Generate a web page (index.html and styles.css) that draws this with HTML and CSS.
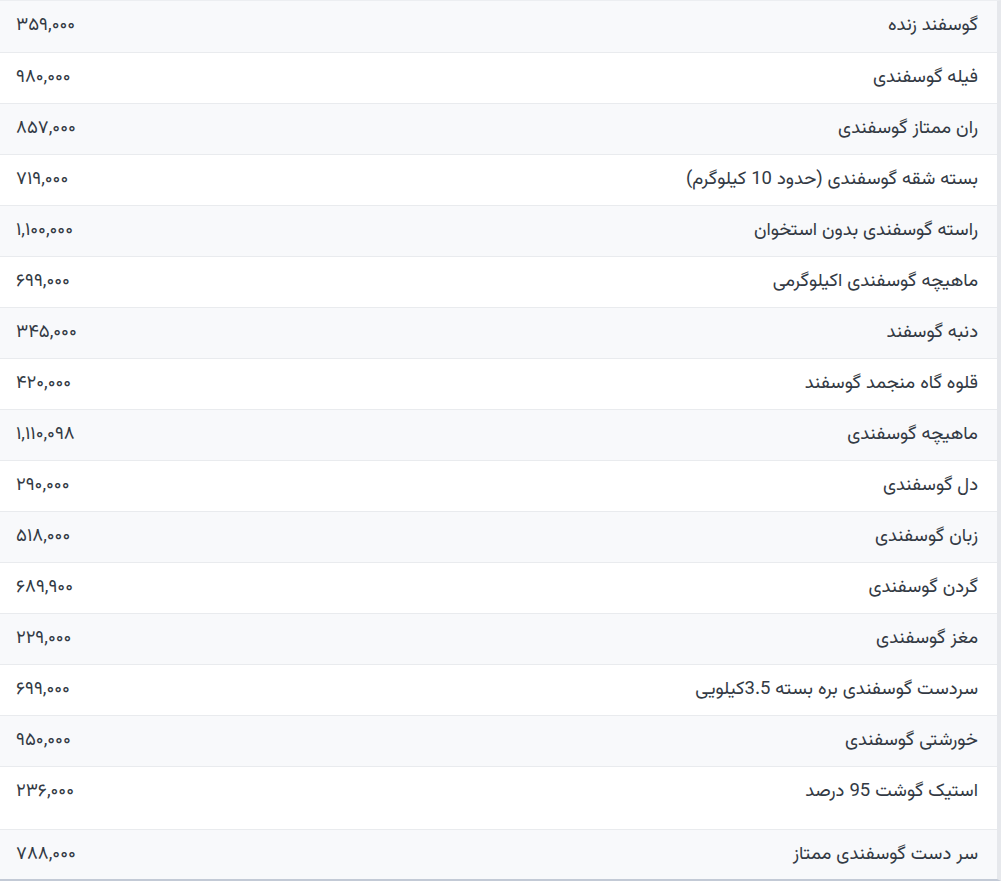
FILE: index.html
```html
<!DOCTYPE html>
<html lang="fa" dir="rtl">
<head>
<meta charset="utf-8">
<title>قیمت گوشت گوسفندی</title>
<link rel="stylesheet" href="styles.css">
</head>
<body>
<div class="wrap">
<table class="prices">
<tbody>
<tr><td class="name">گوسفند زنده</td><td class="price">۳۵۹,۰۰۰</td></tr>
<tr><td class="name">فیله گوسفندی</td><td class="price">۹۸۰,۰۰۰</td></tr>
<tr><td class="name">ران ممتاز گوسفندی</td><td class="price">۸۵۷,۰۰۰</td></tr>
<tr><td class="name">بسته شقه گوسفندی (حدود 10 کیلوگرم)</td><td class="price">۷۱۹,۰۰۰</td></tr>
<tr><td class="name">راسته گوسفندی بدون استخوان</td><td class="price">۱,۱۰۰,۰۰۰</td></tr>
<tr><td class="name">ماهیچه گوسفندی اکیلوگرمی</td><td class="price">۶۹۹,۰۰۰</td></tr>
<tr><td class="name">دنبه گوسفند</td><td class="price">۳۴۵,۰۰۰</td></tr>
<tr><td class="name">قلوه گاه منجمد گوسفند</td><td class="price">۴۲۰,۰۰۰</td></tr>
<tr><td class="name">ماهیچه گوسفندی</td><td class="price">۱,۱۱۰,۰۹۸</td></tr>
<tr><td class="name">دل گوسفندی</td><td class="price">۲۹۰,۰۰۰</td></tr>
<tr><td class="name">زبان گوسفندی</td><td class="price">۵۱۸,۰۰۰</td></tr>
<tr><td class="name">گردن گوسفندی</td><td class="price">۶۸۹,۹۰۰</td></tr>
<tr><td class="name">مغز گوسفندی</td><td class="price">۲۲۹,۰۰۰</td></tr>
<tr><td class="name">سردست گوسفندی بره بسته 3.5کیلویی</td><td class="price">۶۹۹,۰۰۰</td></tr>
<tr><td class="name">خورشتی گوسفندی</td><td class="price">۹۵۰,۰۰۰</td></tr>
<tr class="tall"><td class="name">استیک گوشت 95 درصد</td><td class="price">۲۳۶,۰۰۰</td></tr>
<tr><td class="name">سر دست گوسفندی ممتاز</td><td class="price">۷۸۸,۰۰۰</td></tr>
</tbody>
</table>
</div>
</body>
</html>
```
FILE: styles.css
```css
html, body {
  margin: 0;
  padding: 0;
  background: #ffffff;
}
body {
  font-family: "Vazirmatn", "DejaVu Sans", sans-serif;
  color: #333a44;
}
.wrap {
  width: 997px;
  border-right: 4px solid #e6e8ec;
  border-bottom: 2px solid #c3cad6;
  border-top: 1px solid #eceef1;
}
.prices {
  width: 100%;
  border-collapse: collapse;
  font-size: 18.5px;
}
.prices tr {
  height: 51px;
  border-bottom: 1px solid #e9ebee;
}
.prices tr:last-child {
  border-bottom: none;
  height: 50px;
}
.prices tr:nth-child(odd) {
  background: #f8f9fb;
}
.prices tr.tall {
  height: 63px;
}
.prices td {
  vertical-align: top;
  padding: 12px 19px 0 16px;
  line-height: 26px;
}
.name {
  text-align: right;
}
.price {
  text-align: left;
  width: 180px;
}
```
